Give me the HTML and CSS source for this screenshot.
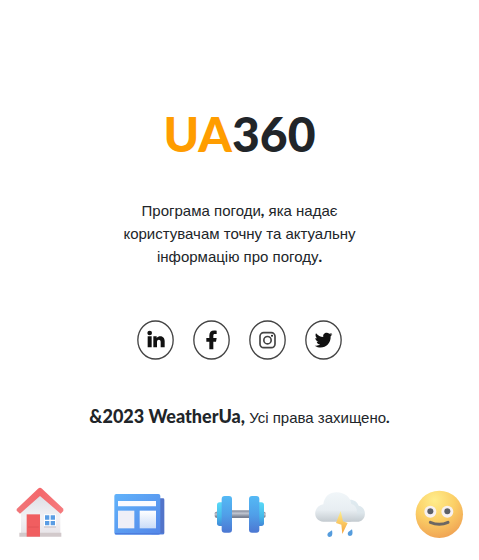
FILE: index.html
```html
<!DOCTYPE html>
<html lang="uk">
<head>
<meta charset="utf-8">
<meta name="viewport" content="width=device-width, initial-scale=1">
<title>UA360</title>
<link rel="stylesheet" href="styles.css">
</head>
<body>
<main class="about">
  <h1 class="brand"><span class="brand-accent">UA</span>360</h1>
  <p class="lead">Програма погоди<b>,</b> яка надає користувачам точну та актуальну інформацію про погоду<b>.</b></p>
  <ul class="social">
    <li><a href="#" aria-label="LinkedIn"><svg viewBox="0 0 111 120">
      <ellipse class="ring" cx="55.500" cy="60" rx="53" ry="57"/>
      <circle cx="38" cy="39" r="7"/><path d="M32 49h12v33H32zM49 49h10v5c6-9 24-8 24 9v19H71V66c0-9-11-9-11 0v16H49z"/></svg></a></li>
    <li><a href="#" aria-label="Facebook"><svg viewBox="0 0 111 120">
      <ellipse class="ring" cx="55.500" cy="60" rx="53" ry="57"/>
      <path d="M49 88V65h-9V54h9v-7c0-13 7-18 22-15v10c-9-1-10 0-10 6v6h10l-2 11h-8v23z"/></svg></a></li>
    <li><a href="#" aria-label="Instagram"><svg viewBox="0 0 111 120">
      <ellipse class="ring" cx="55.500" cy="60" rx="53" ry="57"/>
      <rect class="line" x="33" y="38" width="45" height="45" rx="11"/><circle class="line" cx="55.500" cy="60.500" r="11"/><circle cx="69" cy="47" r="3"/></svg></a></li>
    <li><a href="#" aria-label="Twitter"><svg viewBox="0 0 111 120">
      <ellipse class="ring" cx="55.500" cy="60" rx="53" ry="57"/>
      <path d="M82 42c-2 1-4 2-6 2 2-1 4-3 4-5-2 1-4 2-7 2-8-7-21-1-18 10-9 0-16-4-22-11-3 5-1 12 3 15-2 0-3 0-5-1 0 5 3 9 9 11h-5c1 5 5 8 10 8-4 4-9 5-16 4 22 14 49 0 48-28 2-2 4-4 5-7z"/></svg></a></li>
  </ul>
  <p class="copyright"><strong>&amp;2023 WeatherUa,</strong> Усі права захищено<b>.</b></p>
</main>
<nav class="tabs">
  <a href="#" aria-label="Home"><svg viewBox="0 0 156 156">
    <defs><linearGradient id="wall" x2="0" y2="1"><stop stop-color="#d9dbe2"/><stop offset=".6" stop-color="#f3f2f5"/><stop offset="1" stop-color="#e7e3e7"/></linearGradient>
    <linearGradient id="roof" x2="1" y2="0"><stop stop-color="#f0777a"/><stop offset=".5" stop-color="#f4686c"/><stop offset="1" stop-color="#f57c7f"/></linearGradient></defs>
    <path fill="url(#wall)" d="M21 62 78 14l61 50v80H21z"/>
    <path fill="#d2c9cb" d="M16 137h126v12H16z"/>
    <path fill="#f05e60" d="M38 82h40v67H38z"/><path stroke="#d94f52" stroke-width="2" d="M42 120h32"/>
    <path fill="#fff" d="M90 82h36v40H90z"/><path fill="#c6c2ca" d="M90 118h36v4H90z"/>
    <path fill="#5a9de4" d="M93 85h13v13H93zM110 85h13v13h-13zM93 102h13v13H93zM110 102h13v13h-13z"/>
    <path fill="url(#roof)" d="M78 2q3 0 6 3l64 60v7l-8 8L78 27 18 80l-10-9v-5L72 5q3-3 6-3z"/></svg></a>
  <a href="#" aria-label="News"><svg viewBox="0 0 156 156">
    <defs><linearGradient id="page" x2="1" y2="1"><stop stop-color="#61b3fb"/><stop offset="1" stop-color="#5486e8"/></linearGradient>
    <linearGradient id="pane" x2="0" y2="1"><stop stop-color="#fff"/><stop offset="1" stop-color="#cadcf8"/></linearGradient></defs>
    <rect x="110" y="34" width="41" height="108" rx="4" fill="#5274c9"/>
    <rect x="1" y="21" width="138" height="122" rx="6" fill="url(#page)"/><path fill="#4d7ddd" d="M3 138h146v4H3z"/>
    <path fill="#fafaff" d="M12 42h114v16H12z"/><path fill="#efeff7" d="M12 71h49v53H12z"/><path fill="url(#pane)" d="M77 71h49v53H77z"/></svg></a>
  <a href="#" aria-label="Sport"><svg viewBox="0 0 156 156">
    <defs><linearGradient id="disc" x2="0" y2="1"><stop stop-color="#54b9f5"/><stop offset=".5" stop-color="#50a0e9"/><stop offset="1" stop-color="#4c77d2"/></linearGradient>
    <linearGradient id="cap" x2="0" y2="1"><stop stop-color="#59d9f7"/><stop offset=".6" stop-color="#45b9e9"/><stop offset="1" stop-color="#4287d8"/></linearGradient>
    <linearGradient id="bar" x2="0" y2="1"><stop stop-color="#7c8495"/><stop offset=".4" stop-color="#c1c6d1"/><stop offset="1" stop-color="#697184"/></linearGradient></defs>
    <rect x="2" y="74" width="153" height="18" rx="5" fill="url(#bar)"/><path fill="url(#bar)" d="M50 70h58v22H50z"/>
    <rect x="9" y="46" width="24" height="71" rx="8" fill="url(#cap)"/><rect x="125" y="46" width="25" height="71" rx="8" fill="url(#cap)"/>
    <rect x="23" y="27" width="31" height="110" rx="9" fill="url(#disc)"/><rect x="105" y="27" width="31" height="110" rx="9" fill="url(#disc)"/></svg></a>
  <a href="#" aria-label="Weather"><svg viewBox="0 0 156 156">
    <defs><linearGradient id="cloud" x2="0" y2="1"><stop stop-color="#f1f6f9"/><stop offset=".6" stop-color="#e8eef2"/><stop offset="1" stop-color="#c4cbd0"/></linearGradient>
    <linearGradient id="back" x2="0" y2="1"><stop stop-color="#dfebf1"/><stop offset=".6" stop-color="#dde6eb"/><stop offset="1" stop-color="#c4cbd0"/></linearGradient>
    <linearGradient id="bolt" x2="0" y2="1"><stop stop-color="#fff08c"/><stop offset="1" stop-color="#f5a33c"/></linearGradient></defs>
    <path fill="url(#back)" d="M98 42c14-9 34-2 39 14 25 5 25 43 0 48H90z"/>
    <path fill="url(#cloud)" d="M31 104C-1 103-2 58 31 52c3-23 18-36 40-36 24 0 42 15 44 35 26 6 20 48-5 53z"/>
    <path fill="url(#bolt)" d="m83 72-14 36 16 5 3 28 16-33-14-5z"/>
    <path fill="#559cdd" d="M57 130c3 15-1 20-7 20-8 0-9-10-2-14zM117 127c4 15 0 20-6 20-8 0-9-10-2-14z"/></svg></a>
  <a href="#" aria-label="Mood"><svg viewBox="0 0 156 156">
    <defs><radialGradient id="skin" cx=".4" cy=".2" r=".85"><stop stop-color="#ffed8b"/><stop offset=".5" stop-color="#fbcf66"/><stop offset="1" stop-color="#efa052"/></radialGradient></defs>
    <circle cx="79" cy="82" r="71" fill="url(#skin)"/>
    <circle cx="52" cy="74" r="18" fill="#f7f1f0"/><circle cx="103" cy="74" r="18" fill="#f7f1f0"/>
    <circle cx="52" cy="73" r="9" fill="#5d6066"/><circle cx="103" cy="73" r="9" fill="#5d6066"/>
    <path fill="none" stroke="#6c6763" stroke-width="9" stroke-linecap="round" d="M52 106q27 12 53 0"/></svg></a>
</nav>
</body>
</html>
```
FILE: styles.css
```css
* {
  box-sizing: border-box;
}

body {
  margin: 0;
  min-height: 100vh;
  display: flex;
  flex-direction: column;
  justify-content: space-between;
  background: #fff;
  color: #212529;
  font-family: "Liberation Sans", Arial, sans-serif;
  font-size: 15px;
  line-height: 23px;
}

.about {
  display: flex;
  flex-direction: column;
  align-items: center;
  padding: 104px 16px 32px;
  text-align: center;
}

.brand {
  margin: 0 0 35px;
  font-family: Lato, sans-serif;
  font-size: 48px;
  font-weight: 900;
  line-height: 60px;
}

.brand-accent {
  color: #ff9d00;
}

.lead {
  max-width: 240px;
  margin: 0 0 52px;
}

b,
strong {
  font-family: Lato, sans-serif;
  font-weight: 900;
}

strong {
  font-size: 18px;
}

.social {
  display: flex;
  gap: 19px;
  margin: 0 0 45px;
  padding: 0;
  list-style: none;
}

.social a,
.social svg {
  display: block;
}

.social svg {
  width: 37px;
  height: 40px;
  fill: #111;
}

.social .ring,
.social .line {
  fill: none;
  stroke: #444;
  stroke-width: 4;
}

.social .line {
  stroke-width: 5;
}

.copyright {
  margin: 0;
}

.tabs {
  display: flex;
  justify-content: space-between;
  padding: 0 14px 21px;
}

.tabs a,
.tabs svg {
  display: block;
}

.tabs svg {
  width: 52px;
  height: 52px;
}
```
